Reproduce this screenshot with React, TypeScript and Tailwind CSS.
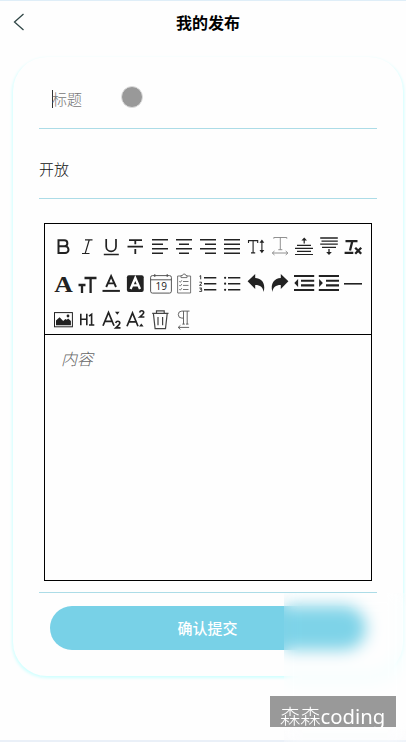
import type { ReactNode } from "react";

const INK = "#222";
const SANS = "'Open Sans', 'Noto Sans', sans-serif";
const SERIF = "'Liberation Serif', serif";

function Icon({ children, label }: { children: ReactNode; label: string }) {
  return (
    <svg viewBox="0 0 24 24" role="img" aria-label={label} className="block h-6 w-6 overflow-visible" fill="none" stroke={INK} strokeWidth="1.6">
      {children}
    </svg>
  );
}

type GlyphProps = { x: number; y: number; size: number; width?: number; weight?: number; fill?: string; family?: string; children: string };

function Glyph({ x, y, size, width, weight = 400, fill = INK, family = SANS, children }: GlyphProps) {
  return (
    <text x={x} y={y} fontSize={size} fontWeight={weight} fontFamily={family} fill={fill} stroke="none" textLength={width} lengthAdjust="spacingAndGlyphs">
      {children}
    </text>
  );
}

const tools: { label: string; art: ReactNode }[] = [
  { label: "bold", art: <path strokeWidth="2" d="M7.5 6.2v12.9h6.6a3.4 3.4 0 0 0 0-6.8H7.5h5.8a3 3 0 0 0 0-6.1z" /> },
  { label: "italic", art: <path strokeWidth="1.2" d="M10 5.8h7.5M7 19.5h7.5M14.2 6l-4 13.3" /> },
  { label: "underline", art: <path d="M7.2 5v7.5a4.9 4.9 0 0 0 9.8 0V5M4.8 20.5h15" strokeWidth="1.7" /> },
  { label: "strike", art: <path d="M6 6.2h13M12.3 6v4.3M4.5 12.6h15.5M12.3 15v5" strokeWidth="1.8" /> },
  { label: "align left", art: <path d="M4 5.8h16M4 10.3h11M4 14.8h16M4 19.2h11" /> },
  { label: "align center", art: <path d="M4 5.8h16M7 10.3h10M4 14.8h16M7 19.2h10" /> },
  { label: "align right", art: <path d="M4 5.8h16M9 10.3h11M4 14.8h16M9 19.2h11" /> },
  { label: "justify", art: <path d="M4 5.8h16M4 10.3h16M4 14.8h16M4 19.2h16" /> },
  {
    label: "line height",
    art: (
      <>
        <path strokeWidth="1.1" d="M4.5 9V6.6h9.2V9M9.1 6.6v12.2M7 18.9h4.2M17.9 8v9" />
        <path fill={INK} stroke="none" d="M17.9 5.6l2.4 3.2h-4.8zM17.9 19.2l2.4-3.2h-4.8z" />
      </>
    ),
  },
  { label: "letter spacing", art: <path stroke="#858585" strokeWidth="0.9" d="M5.8 4.7V3.5h13v1.2M12.3 3.5v12.2M10.3 15.7h4M4.4 19h15.4M6.5 17l-2.2 2 2.2 2M17.7 17l2.2 2-2.2 2" /> },
  {
    label: "margin top",
    art: (
      <>
        <path strokeWidth="1.2" d="M5 11.4h14M3 14.4h18M5 17.4h14M3 20.5h18M12.2 5v4.5" />
        <path fill={INK} stroke="none" d="M12.2 3.6l2.8 3H9.4z" />
      </>
    ),
  },
  {
    label: "margin bottom",
    art: (
      <>
        <path strokeWidth="1.3" d="M3.2 4h17.6M4.5 7.1h16.3M3.2 10.2h17.6M5 13.3h14M12 15v4" />
        <path fill={INK} stroke="none" d="M12 21l2.8-3H9.2z" />
      </>
    ),
  },
  { label: "clear format", art: <path strokeWidth="2.3" d="M4.5 7.2h12M11.3 7.2L9 16.5M3.6 18.8h8.7M14.2 13.8l6 6M20.2 13.8l-6 6" /> },

  { label: "font", art: <Glyph x={3.2} y={20} size={24} width={18.6} weight={700} family={SERIF}>A</Glyph> },
  { label: "font size", art: <path strokeWidth="2.3" d="M9.5 6h12M15.6 6v15M3.5 13h7M7 13v8" /> },
  { label: "color", art: <><path strokeWidth="1.9" d="M7.2 15l4.9-11 4.9 11M9 11.4h6.2" /><path strokeWidth="2" d="M3.5 18.9h17.4" /></> },
  { label: "background color", art: <><rect x="3.9" y="3.2" width="16.8" height="16.8" rx="2" fill={INK} stroke="none" /><path stroke="#fff" strokeWidth="2.3" d="M7.6 17l4.7-11L17 17M9.3 13.3h6" /></> },
  {
    label: "date",
    art: (
      <>
        <path strokeWidth="0.9" stroke="#444" d="M4.5 3.6h17q1.9 0 1.9 1.8v13.8q0 1.9-1.9 1.9h-17q-1.9 0-1.9-1.9V5.4q0-1.8 1.9-1.8zM2.6 7.8h20.8M6.8 2v3M19.2 2v3" />
        <Glyph x={7.4} y={18} size={10.5} width={11.5}>19</Glyph>
      </>
    ),
  },
  { label: "check list", art: <path stroke="#666" strokeWidth="0.9" d="M9 4H5.6v17h13V4H15M9 5.6V3.5h1.5l.8-1.4h1.8l.8 1.4H15v2.1zM7.3 9.3l1 1 1.5-2M11 9.5h5.5M7.3 13.1l1 1 1.5-2M11 13.4h5.5M7.3 17.2l1 1 1.5-2M11 17.5h5.5" /> },
  {
    label: "ordered list",
    art: (
      <>
        <path strokeWidth="1.6" d="M8 5.8h12.3M8 11.7h12.3M8 17.8h12.3" />
        <path strokeWidth="0.9" d="M3.5 4.3l1.2-.7v3.7M3.5 10.2h2v1.2l-2 1.9h2.3M3.4 16h2.3l-1.2 1.4h1.2v2H3.3" />
      </>
    ),
  },
  {
    label: "bullet list",
    art: (
      <>
        <path strokeWidth="1.4" d="M8 5.8h12.3M8 11.7h12.3M8 17.8h12.3" />
        <g fill={INK} stroke="none"><circle cx="5.1" cy="5.8" r="1.1" /><circle cx="5.1" cy="11.7" r="1.1" /><circle cx="5.1" cy="17.8" r="1.1" /></g>
      </>
    ),
  },
  { label: "undo", art: <path fill={INK} stroke="none" d="M3.6 9.3L11.2 2.1v3.9c6.2.2 10.8 5 8.4 13.9-.5-4.5-3.2-7-8.4-7v4z" /> },
  { label: "redo", art: <path fill={INK} stroke="none" d="M20.4 9.3L12.8 2.1v3.9c-6.2.2-10.8 5-8.4 13.9.5-4.5 3.2-7 8.4-7v4z" /> },
  { label: "outdent", art: <><path strokeWidth="2.1" d="M2 4h20.2M9 8.8h13.2M9 13.4h13.2M2 18h20.2" /><path fill={INK} stroke="none" d="M2.3 11l3.8-4v8z" /></> },
  { label: "indent", art: <><path strokeWidth="2.1" d="M1.8 4H22M9 8.8h13M9 13.4h13M1.8 18H22" /><path fill={INK} stroke="none" d="M5.9 11L2.1 7v8z" /></> },
  { label: "divider", art: <path d="M3 11.8h18" strokeWidth="1.6" /> },

  {
    label: "image",
    art: (
      <>
        <rect x="3.5" y="4.6" width="17.9" height="14.2" strokeWidth="1" />
        <path fill={INK} stroke="none" d="M5 17.3v-4.9l3.6-3.1 3.6 3.6 2.2-1.8 1.4.6 1.3-1.2 2.8 2.5v4.3z" />
        <circle cx="17" cy="8" r="1.4" fill={INK} stroke="none" />
      </>
    ),
  },
  { label: "header", art: <path strokeWidth="1.6" d="M5.8 5.8v11.4M11.8 5.8v11.4M5.8 11.3h6M14 8.2l2.6-1.8v10.8M14 17h5.3" /> },
  {
    label: "subscript",
    art: (
      <>
        <path strokeWidth="1.7" d="M4 17.8L9.5 4.5 15 17.8M6 13.4h7.1" />
        <path strokeWidth="1.6" d="M16.7 14.9q.5-1.6 2.1-1.6 2 0 2 1.8 0 1.3-4 4.8h4.7" />
        <path fill={INK} stroke="none" d="M16 3.8h4.6l-2.3 2.9z" />
      </>
    ),
  },
  {
    label: "superscript",
    art: (
      <>
        <path strokeWidth="1.7" d="M4 18.3L9.5 5 15 18.3M6 13.9h7.1" />
        <path strokeWidth="1.6" d="M16.6 4.4q.5-1.6 2.1-1.6 2 0 2 1.7 0 1.2-3.9 4.5h4.6" />
        <path fill={INK} stroke="none" d="M16 18.5h4.6l-2.3-2.9z" />
      </>
    ),
  },
  { label: "clear", art: <path strokeWidth="1.2" stroke="#444" d="M4.2 5.3h16.3M8.5 5V2.8h7.7V5M5.4 5.5l1.7 15.1h10.4l1.7-15.1M10 9v8.2M14.6 9v8.2" /> },
  { label: "direction", art: <path strokeWidth="0.9" stroke="#555" d="M17.5 3.1H9.8a3.5 3.5 0 0 0 0 7h1.5M11.5 3.1v13M15.2 3.1v13M10.3 16.1h2.5M14 16.1h2.5M6.3 19.4h10.8M8.4 17.4l-2.2 2 2.2 2" /> },
];

export default function App() {
  return (
    <div className="relative h-[742px] w-[406px] overflow-hidden border-t border-[#dfeef8] bg-[#fefefe] font-['Noto_Sans_CJK_SC',sans-serif] text-[15px] text-[#333]">
      <header className="grid h-14 grid-cols-[40px_1fr_30px] pt-[9px]">
        <svg viewBox="0 0 12 18" className="mt-[3px] ml-[13px] h-[18px] w-3" fill="none" stroke="#2f4545" strokeWidth="1.3">
          <path d="M10.5 1L1.5 9l9 8" />
        </svg>
        <h1 className="text-center text-base leading-6 font-bold text-black">我的发布</h1>
      </header>

      <main className="ml-[13px] flex h-[619px] w-[390px] flex-col rounded-[34px] bg-[#fefefe] pl-[26px] shadow-[0_1.5px_3px_0.5px_#d0ffff]">
        <div className="flex h-[72px] w-[338px] items-center border-b border-[#acdce7] pt-[13px] pl-[13px]">
          <span className="h-[18px] w-px bg-[#333]" />
          <span className="ml-[-1px] font-light text-[#777]">标题</span>
          <span className="mt-[-5px] ml-[39px] h-[22px] w-[22px] rounded-full border border-[#ddd] bg-[#999]" />
        </div>
        <div className="flex h-[70px] w-[338px] items-center border-b border-[#acdce7] pt-[11px] font-light text-[#111]">开放</div>
        <div className="h-[394px] w-[338px] border-b border-[#acdce7] pt-6 pl-[5px]">
          <div className="flex h-[358px] w-[328px] flex-col border border-black">
            <div className="grid h-[111px] shrink-0 grid-cols-[repeat(13,24.15px)] grid-rows-[24px_24px_24px] content-start gap-y-[13px] border-b border-black pt-[10px] pl-[6px] [&>svg:nth-child(n+14):nth-child(-n+26)]:mt-px">
              {tools.map((tool) => (
                <Icon key={tool.label} label={tool.label}>{tool.art}</Icon>
              ))}
            </div>
            <p className="pt-[11px] pl-4 text-base leading-6 font-light text-[#666] italic">内容</p>
          </div>
        </div>
        <button className="mt-[13px] ml-[11px] h-11 w-[316px] shrink-0 rounded-full bg-[#78d1e7] pr-px font-medium text-white">确认提交</button>
      </main>

      <div className="absolute bottom-0 left-0 h-[2px] w-full bg-[#eaf0f8]" />
      <div className="absolute top-[592px] left-[284px] h-[149px] w-[122px] bg-white/5 backdrop-blur-[8px]" />
      <div className="absolute top-[695px] left-[270px] h-[31px] w-[126px] bg-[#999] pl-[10px] font-['Noto_Sans','Noto_Sans_CJK_SC',sans-serif] text-[20.3px] leading-[38px] whitespace-nowrap text-white">
        <span className="font-['Noto_Sans_CJK_SC',sans-serif] font-light">森森</span>coding
      </div>
    </div>
  );
}
